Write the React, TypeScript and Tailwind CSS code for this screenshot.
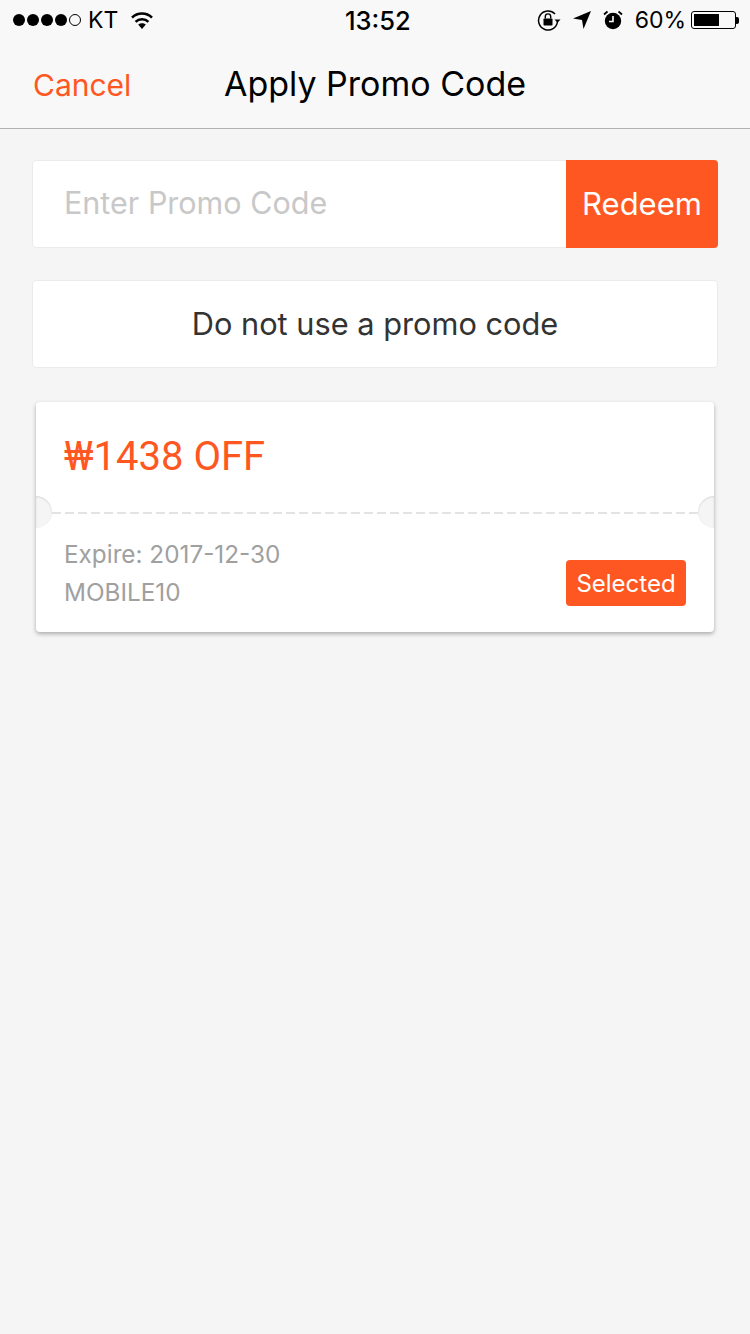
const SANS = "font-['Inter','Liberation_Sans',sans-serif]";

function StatusBar() {
  return (
    <div className="relative flex h-10 items-center justify-between pl-[13px] pr-[11px] text-black">
      <div className="flex items-center">
        <div className="flex items-center gap-[2px]">
          <span className="size-[12px] rounded-full bg-black" />
          <span className="size-[12px] rounded-full bg-black" />
          <span className="size-[12px] rounded-full bg-black" />
          <span className="size-[12px] rounded-full bg-black" />
          <span className="size-[12px] rounded-full border border-black" />
        </div>
        <span className="ml-[7px] text-[23px] leading-none">KT</span>
        <svg className="ml-[11px]" width="26" height="20" viewBox="0 0 26 20">
          <path d="M13 19 L9.2 14.6 C11.4 12.8 14.6 12.8 16.8 14.6 Z" fill="#000" />
          <path d="M6.6 11.8 C10 8.4 16 8.4 19.4 11.8" fill="none" stroke="#000" strokeWidth="2.6" />
          <path d="M3 7.6 C8.6 2.2 17.4 2.2 23 7.6" fill="none" stroke="#000" strokeWidth="2.6" />
        </svg>
      </div>
      <span className="absolute left-[345px] top-[8px] text-[25.5px] font-medium leading-[26px]">13:52</span>
      <div className="flex items-center">
        <svg width="24" height="22" viewBox="0 0 24 22">
          <path d="M20.5 12.5 A9.5 9.5 0 1 1 18 5" fill="none" stroke="#000" strokeWidth="1.5" />
          <path d="M17.5 10.5 h6 l-3 3.2 Z" fill="#000" />
          <rect x="6.5" y="9.5" width="9" height="7" rx="0.8" fill="#000" />
          <path d="M8.3 9.5 V7.6 a2.7 2.7 0 0 1 5.4 0 V9.5" fill="none" stroke="#000" strokeWidth="1.4" />
        </svg>
        <svg className="ml-[12px]" width="18" height="20" viewBox="0 0 18 20">
          <path d="M18 1 L10.5 19 L9 10 L0 8.5 Z" fill="#000" />
        </svg>
        <svg className="ml-[12px]" width="20" height="20" viewBox="0 0 20 20">
          <circle cx="10" cy="11" r="8.2" fill="#000" />
          <path d="M10 6 V11.5 H6" fill="none" stroke="#fff" strokeWidth="1.6" />
          <path d="M1 4.5 L4.5 1.5 M19 4.5 L15.5 1.5" stroke="#000" strokeWidth="1.8" />
        </svg>
        <span className="ml-[12px] text-[23px] leading-none">60%</span>
        <div className="ml-[5px] flex items-center">
          <div className="h-[18px] w-[45px] rounded-[3px] border border-black p-[2px]">
            <div className="h-full w-[25px] bg-black" />
          </div>
          <span className="h-[7px] w-[3px] rounded-r-[2px] bg-black" />
        </div>
      </div>
    </div>
  );
}

export default function App() {
  return (
    <div className={`flex min-h-[1334px] w-[750px] flex-col bg-[#f5f5f5] ${SANS}`}>
      <header className="border-b border-[#b2b2b2] bg-[#f8f8f8]">
        <StatusBar />
        <div className="relative flex h-[88px] items-center justify-center pb-[1px]">
          <span className="absolute left-[33px] top-[29px] text-[30px] leading-[32px] text-[#ff5722]">Cancel</span>
          <h1 className="text-[34px] leading-10 font-normal text-black">Apply Promo Code</h1>
        </div>
      </header>

      <main className="flex flex-col px-8 pt-[31px]">
        <div className="flex h-[88px] rounded-[4px] border border-[#ebebeb] bg-white">
          <div className="flex flex-1 items-center pl-[31px] pb-[2px] text-[30.5px] text-[#c8c8c8]">Enter Promo Code</div>
          <button className="-my-px -mr-px w-[152px] rounded-r-[4px] bg-[#ff5722] text-[31px] text-white">Redeem</button>
        </div>

        <div className="mt-8 flex h-[88px] items-center justify-center rounded-[4px] border border-[#ebebeb] bg-white text-[30.75px] text-[#333]">
          Do not use a promo code
        </div>

        <section className="relative mx-1 mt-[34px] h-[230px] rounded-[4px] bg-white shadow-[0_2px_4px_rgba(0,0,0,0.3)]">
          <div className="flex h-[110px] items-center px-7 font-['Roboto',sans-serif] text-[40px] leading-none text-[#ff5722]">
            ₩1438 OFF
          </div>
          <div className="mx-4 h-[2px] bg-[repeating-linear-gradient(90deg,#e3e3e3_0_9px,transparent_9px_13px)]" />
          <span className="absolute left-0 top-[94px] h-[32px] w-[16px] rounded-r-full bg-[#f5f5f5] shadow-[inset_0_1px_2px_rgba(0,0,0,0.12)]" />
          <span className="absolute right-0 top-[94px] h-[32px] w-[16px] rounded-l-full bg-[#f5f5f5] shadow-[inset_0_1px_2px_rgba(0,0,0,0.12)]" />
          <div className="flex items-end justify-between px-7">
            <div className="pt-[21px] text-[24.3px] leading-[38px] text-[#a0a0a0]">
              <div>Expire: 2017-12-30</div>
              <div>MOBILE10</div>
            </div>
            <span className="mb-[5px] flex h-[46px] w-[120px] items-center justify-center rounded-[4px] bg-[#ff5722] pt-[2px] text-[24px] text-white">Selected</span>
          </div>
        </section>
      </main>
    </div>
  );
}
